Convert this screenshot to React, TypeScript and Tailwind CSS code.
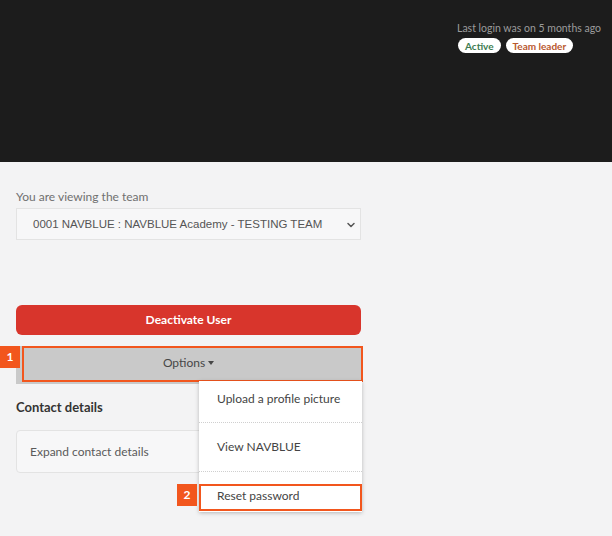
import { ChevronDown } from 'lucide-react';

function Badge({ label, tone }: { label: string; tone: string }) {
  return (
    <span className={`rounded-full bg-white px-[7px] h-[15px] flex items-center text-[10px] font-bold leading-none ${tone}`}>
      {label}
    </span>
  );
}

function Marker({ n, className }: { n: string; className: string }) {
  return (
    <div
      className={`absolute w-[20px] h-[22px] bg-[#f2561d] text-white text-[12px] font-bold flex items-center justify-center ${className}`}
    >
      {n}
    </div>
  );
}

export default function App() {
  return (
    <div className="relative w-[612px] h-[536px] overflow-hidden bg-[#f3f3f4] font-['Lato',sans-serif]">
      {/* Header */}
      <header className="h-[162px] bg-[#1c1c1c] flex justify-end pr-[9px] pt-[21px]">
        <div className="flex flex-col gap-[3px] w-[146px]">
          <span className="text-[10.5px] leading-[14px] text-[#9b9b9b] whitespace-nowrap">
            Last login was on 5 months ago
          </span>
          <div className="flex gap-[5px] pl-[1px]">
            <Badge label="Active" tone="text-[#3d7b50]" />
            <Badge label="Team leader" tone="text-[#b9582f]" />
          </div>
        </div>
      </header>

      {/* Body */}
      <main className="w-[361px] pl-4 pt-[27px]">
        <p className="text-[12px] leading-[16px] text-[#707070]">You are viewing the team</p>
        <div className="mt-[3px] h-[32px] bg-[#f7f7f8] border border-[#e3e3e3] flex items-center justify-between pl-[16px] pr-[3px] pt-[2px]">
          <span className="font-['Liberation_Sans',sans-serif] text-[11.5px] text-[#555]">
            0001 NAVBLUE : NAVBLUE Academy - TESTING TEAM
          </span>
          <ChevronDown size={12} strokeWidth={3} className="text-[#555]" />
        </div>

        <button className="mt-[65px] w-full h-[30px] rounded-[6px] bg-[#d8352c] text-white text-[12px] font-bold">
          Deactivate User
        </button>

        <div className="mt-[11px] h-[38px] pb-[4px] bg-[#c9c9c9] flex items-center justify-center gap-[3px] text-[12px] text-[#474747]">
          Options
          <span className="w-0 h-0 border-x-[3px] border-x-transparent border-t-[4px] border-t-[#474747]" />
        </div>

        <h2 className="mt-[14px] text-[13px] font-bold text-[#333] leading-[18px]">Contact details</h2>
        <div className="mt-[14px] h-[43px] bg-[#f7f7f8] border border-[#e3e3e3] rounded-[4px] flex items-center pl-[13px]">
          <span className="text-[12px] text-[#5a5a5a]">Expand contact details</span>
        </div>
      </main>

      {/* Highlight for Options */}
      <div className="absolute left-[22px] top-[346px] w-[341px] h-[36px] border-2 border-[#f2561d]" />
      <Marker n="1" className="left-0 top-[346px]" />

      {/* Dropdown menu */}
      <div className="absolute left-[199px] top-[381px] w-[163px] bg-white shadow-[0_1px_4px_rgba(0,0,0,0.25)] text-[12px] text-[#444]">
        <div className="h-[42px] flex items-center pl-[18px] pb-[6px] border-b border-dotted border-[#cfcfcf]">
          Upload a profile picture
        </div>
        <div className="h-[49px] flex items-center pl-[18px] border-b border-dotted border-[#cfcfcf]">
          View NAVBLUE
        </div>
        <div className="h-[40px] flex items-center pl-[18px] pt-[8px]">Reset password</div>
      </div>

      {/* Highlight for Reset password */}
      <div className="absolute left-[199px] top-[484px] w-[163px] h-[27px] border-2 border-[#f2561d]" />
      <Marker n="2" className="left-[177px] top-[484px]" />
    </div>
  );
}
